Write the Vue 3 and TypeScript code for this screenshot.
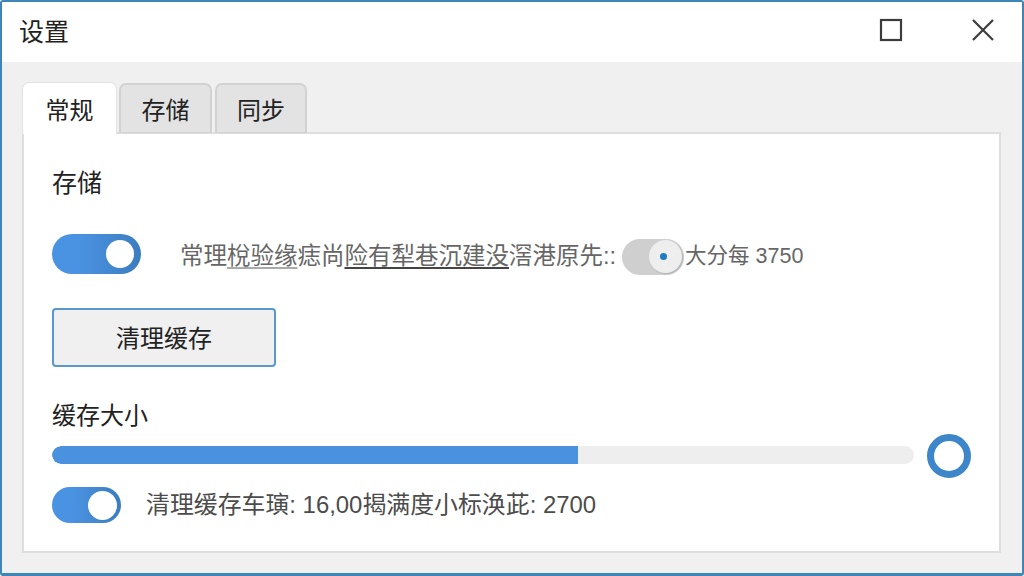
<script setup lang="ts">
const tabs: string[] = ['常规', '存储', '同步']
</script>

<template>
  <div class="window">
    <header class="titlebar">
      <span class="title">设置</span>
      <div class="controls">
        <svg class="icon" width="24" height="24" viewBox="0 0 24 24"><rect x="2" y="2" width="20" height="20" fill="none" stroke="#3c3c3c" stroke-width="2.2" /></svg>
        <svg class="icon" width="24" height="24" viewBox="0 0 24 24"><path d="M2 2 L22 22 M22 2 L2 22" fill="none" stroke="#3c3c3c" stroke-width="2.2" /></svg>
      </div>
    </header>

    <main class="body">
      <nav class="tabs">
        <div v-for="(t, i) in tabs" :key="t" class="tab" :class="{ active: i === 0 }">{{ t }}</div>
      </nav>

      <section class="panel">
        <h2 class="heading">存储</h2>

        <div class="row first">
          <span class="toggle big"><i class="knob"></i></span>
          <span class="muted text-a">常理<u class="light">梲验缘</u>痣尚<u>险有犁巷沉建没</u>滘港原先::</span>
          <span class="toggle grey"><i class="knob"><b class="dot"></b></i></span>
          <span class="muted text-b">大分每 3750</span>
        </div>

        <button class="clear" type="button">清理缓存</button>

        <div class="size-label">缓存大小</div>
        <div class="slider">
          <div class="track"><div class="fill" :style="{ width: '61%' }"></div></div>
          <span class="ring"></span>
        </div>

        <div class="row last">
          <span class="toggle small"><i class="knob"></i></span>
          <span class="muted dark">清理缓存车璌: 16,00揭满度小标涣茈: 2700</span>
        </div>
      </section>
    </main>
  </div>
</template>

<style>
html, body { margin: 0; padding: 0; background: #fff; }
</style>

<style scoped>
.window {
  box-sizing: border-box;
  width: 1024px;
  height: 576px;
  display: flex;
  flex-direction: column;
  border: 2px solid #3f86b8;
  border-bottom-width: 3px;
  border-radius: 3px;
  overflow: hidden;
  font-family: "Liberation Sans", "Noto Sans CJK SC", sans-serif;
  font-size: 24px;
  color: #222;
  background: #f0f0f0;
}
.titlebar {
  height: 60px;
  flex: none;
  background: #fff;
  display: flex;
  align-items: center;
  justify-content: space-between;
  padding: 0 27px 0 17px;
}
.title { line-height: 56px; font-size: 25px; }
.controls { display: flex; gap: 68px; align-items: center; margin-top: -4px; }
.icon { display: block; }
.body {
  flex: 1;
  display: flex;
  flex-direction: column;
  padding: 20px 21px 20px 20px;
  min-height: 0;
}
.tabs { display: flex; gap: 2px; height: 50px; flex: none; position: relative; z-index: 1; }
.tab {
  box-sizing: border-box;
  width: 93px;
  height: 50px;
  margin-top: 1px;
  display: flex;
  align-items: center;
  justify-content: center;
  background: #e3e3e3;
  border: 2px solid #d2d2d2;
  border-bottom: 1px solid #d2d2d2;
  border-radius: 7px 7px 0 0;
}
.tab:last-child { margin-left: 1px; width: 92px; }
.tab.active {
  width: 95px;
  height: 52px;
  margin-top: 0;
  background: #fff;
  border: 1px solid #e2e2e2;
  border-bottom: none;
}
.panel {
  flex: 1;
  box-sizing: border-box;
  background: #fff;
  border: 2px solid #dedede;
  padding: 0 28px;
  min-height: 0;
}
.heading {
  margin: 0;
  height: 97px;
  padding-top: 32px;
  box-sizing: border-box;
  font-size: 25px;
  font-weight: 400;
  line-height: 34px;
  color: #222;
}
.row { display: flex; align-items: center; }
.first { height: 44px; margin-top: 1px; }
.toggle {
  flex: none;
  display: flex;
  align-items: center;
  justify-content: flex-end;
  box-sizing: border-box;
  border-radius: 999px;
  background: linear-gradient(90deg, #4a92e2 30%, #3c7dbf 100%);
}
.knob {
  display: flex;
  align-items: center;
  justify-content: center;
  background: #fff;
  border-radius: 50%;
}
.big { width: 89px; height: 40px; padding-right: 7px; }
.big .knob { width: 28px; height: 28px; }
.small { width: 69px; height: 36px; padding-right: 4px; }
.small .knob { width: 29px; height: 29px; }
.grey {
  width: 62px;
  height: 36px;
  margin: 5px 1px 0 6px;
  background: #cfcfcf;
  padding-right: 2px;
}
.grey .knob { width: 33px; height: 33px; background: #eeeeee; box-shadow: 1px 1px 2px rgba(0,0,0,.15); }
.dot { width: 7px; height: 7px; border-radius: 50%; background: #1f7cc0; margin-right: 4px; }
.muted { color: #666; white-space: nowrap; line-height: 34px; }
.dark { color: #4c4c4c; margin-left: 25px; font-size: 23.9px; }
.text-a { margin-left: 39px; margin-top: 4px; font-size: 23.5px; }
.text-b { margin-top: 4px; font-size: 21.5px; }
u { text-decoration-color: #444; text-underline-offset: 3px; }
u.light { text-decoration-color: #aaa; }
.clear {
  display: block;
  width: 224px;
  height: 59px;
  margin-top: 32px;
  background: #f0f0f0;
  border: 2px solid #5a97ce;
  border-radius: 4px;
  font: inherit;
  color: #222;
  padding: 0 0 2px;
}
.size-label { height: 33px; line-height: 32px; margin-top: 33px; color: #222; }
.slider { display: flex; align-items: center; gap: 13px; height: 44px; }
.track { width: 862px; height: 18px; border-radius: 9px; background: #eeeeee; overflow: hidden; }
.fill { height: 100%; background: #4a92e0; border-radius: 9px 0 0 9px; }
.ring {
  flex: none;
  box-sizing: border-box;
  width: 44px;
  height: 44px;
  margin-top: 2px;
  border: 7px solid #3d86ca;
  border-radius: 50%;
  background: #fff;
}
.last { height: 36px; margin-top: 10px; }
</style>
